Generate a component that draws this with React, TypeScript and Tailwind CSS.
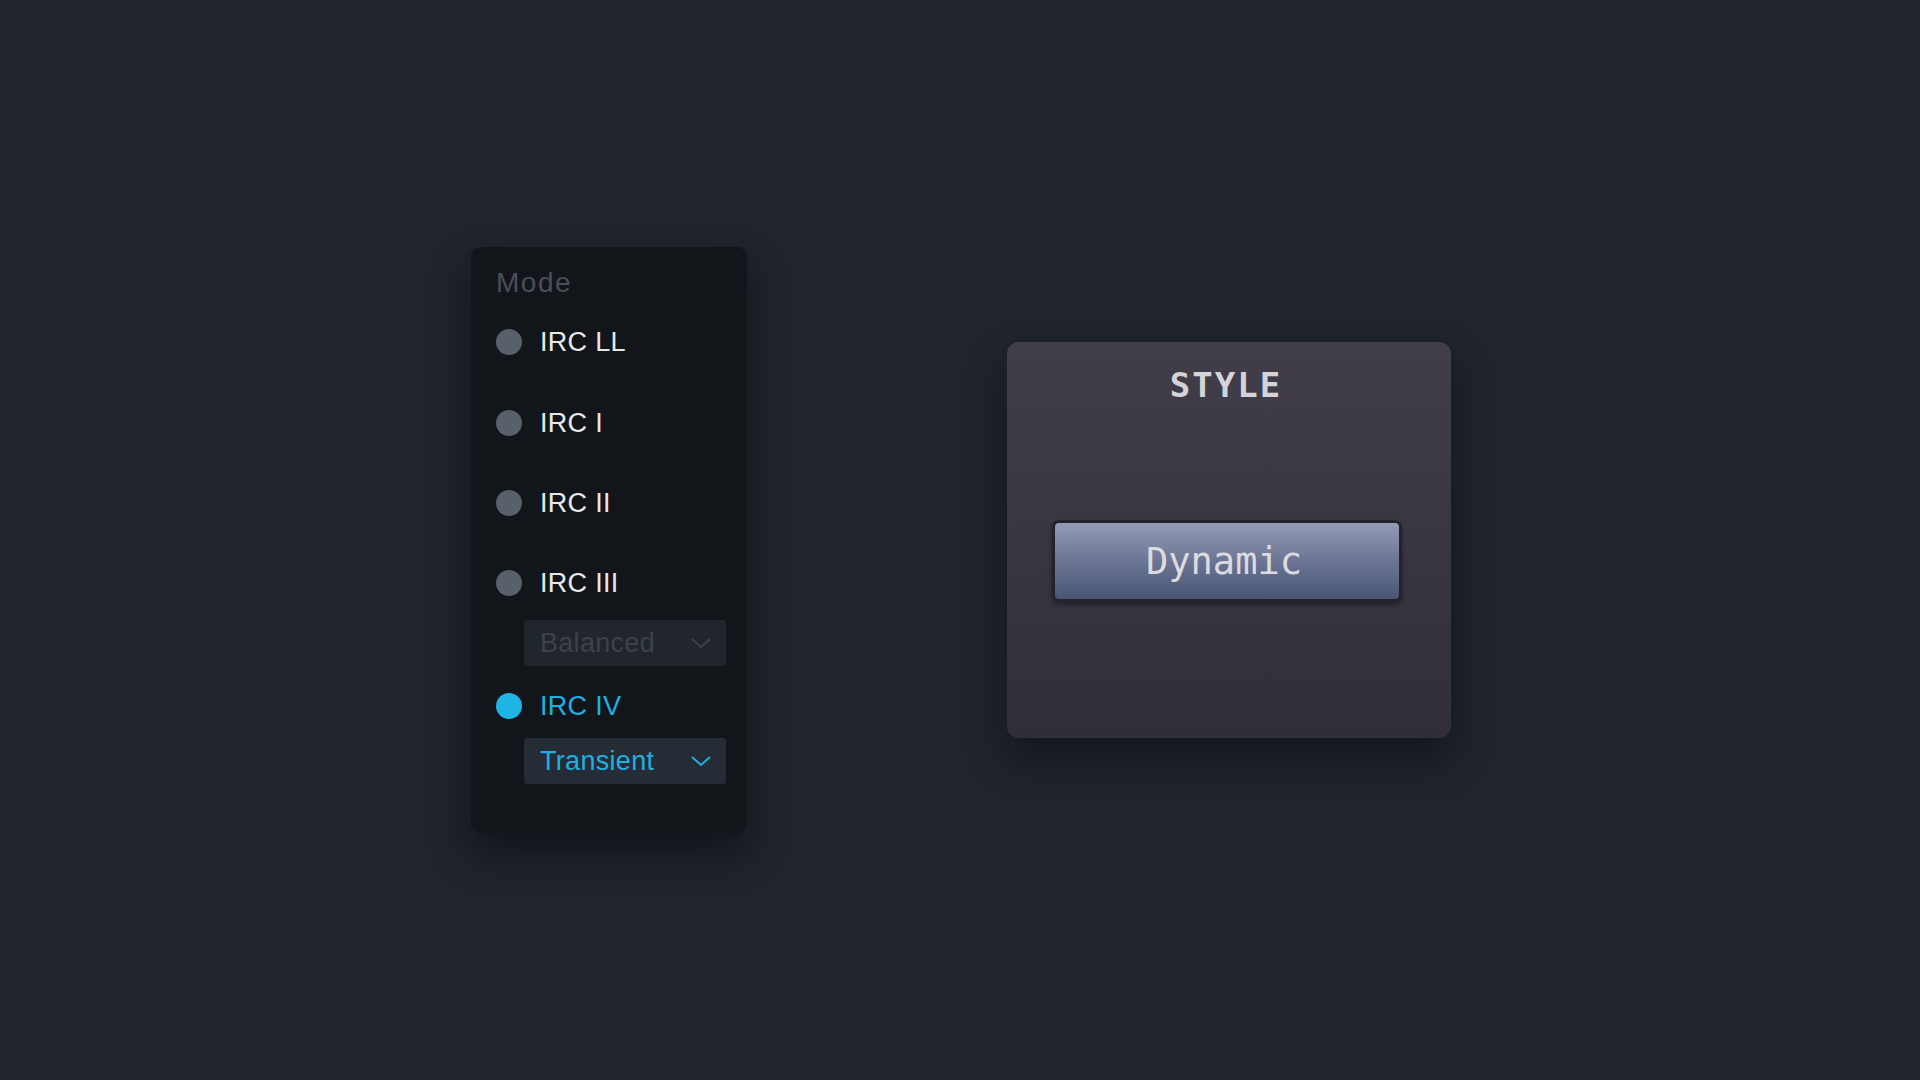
import React from "react";

function Chevron({ active }: { active: boolean }) {
    return (
        <svg width="22" height="12" viewBox="0 0 22 12" fill="none">
            <path
                d="M2 2 L11 10 L20 2"
                stroke={active ? "#1eb0e2" : "#3e434b"}
                strokeWidth="2"
            />
        </svg>
    );
}

function ModeRow({ label, active }: { label: string; active: boolean }) {
    return (
        <div className="flex items-center h-10">
            <div
                className={`w-[26px] h-[26px] rounded-full ${active ? "bg-[#1eb4e6]" : "bg-[#58616b]"}`}
            />
            <span
                className={`ml-[18px] text-[27px] leading-none tracking-[0.3px] ${active ? "text-[#1eb0e2]" : "text-[#e8e8ea]"}`}
            >
                {label}
            </span>
        </div>
    );
}

function SubSelect({ value, active }: { value: string; active: boolean }) {
    return (
        <div
            className={`ml-[28px] w-[202px] h-[46px] rounded-[3px] flex items-center justify-between pl-[16px] pr-[14px] ${active ? "bg-[#252c35]" : "bg-[#21252c]"}`}
        >
            <span
                className={`text-[27px] leading-none tracking-[0.3px] ${active ? "text-[#1eb0e2]" : "text-[#3d424a]"}`}
            >
                {value}
            </span>
            <Chevron active={active} />
        </div>
    );
}

export default function App() {
    return (
        <div className="min-h-screen w-full bg-[#1f242d] font-['Liberation_Sans',Arial,sans-serif]">
            <div className="flex items-start pl-[471px] pt-[247px] gap-[260px]">
                {/* Mode panel */}
                <div className="w-[276px] h-[586px] bg-[#121519] rounded-[10px] pt-[20px] pl-[25px] flex flex-col shadow-[0_20px_40px_rgba(0,0,0,0.45)]">
                    <div className="text-[28px] leading-[32px] text-[#4a4f57] tracking-[1.5px]">Mode</div>
                    <div className="mt-[23px]">
                        <ModeRow label="IRC LL" active={false} />
                    </div>
                    <div className="mt-[41px]">
                        <ModeRow label="IRC I" active={false} />
                    </div>
                    <div className="mt-[40px]">
                        <ModeRow label="IRC II" active={false} />
                    </div>
                    <div className="mt-[40px]">
                        <ModeRow label="IRC III" active={false} />
                    </div>
                    <div className="mt-[17px]">
                        <SubSelect value="Balanced" active={false} />
                    </div>
                    <div className="mt-[20px]">
                        <ModeRow label="IRC IV" active={true} />
                    </div>
                    <div className="mt-[12px]">
                        <SubSelect value="Transient" active={true} />
                    </div>
                </div>

                {/* Style panel */}
                <div className="mt-[95px] w-[444px] h-[396px] rounded-[12px] bg-gradient-to-b from-[#413e49] to-[#322e39] pt-[24px] flex flex-col items-center shadow-[0_20px_40px_rgba(0,0,0,0.4)]">
                    <div className="font-['DejaVu_Sans_Mono',monospace] font-bold text-[34px] leading-[38px] tracking-[2px] text-[#d4d4d8] pr-[6px]">
                        STYLE
                    </div>
                    <div className="mt-[116px] mr-[4px] w-[350px] h-[82px] rounded-[7px] border-[3px] border-[#24232b] bg-gradient-to-b from-[#939bb8] via-[#6c7593] to-[#4a5576] flex items-center justify-center shadow-[0_3px_4px_rgba(0,0,0,0.35)]">
                        <span className="font-['DejaVu_Sans_Mono',monospace] text-[37px] leading-none text-[#dcdce0] pr-[6px]">
                            Dynamic
                        </span>
                    </div>
                </div>
            </div>
        </div>
    );
}
